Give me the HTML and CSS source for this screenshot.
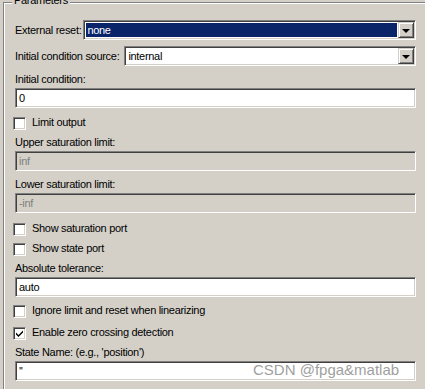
FILE: index.html
```html
<!DOCTYPE html>
<html>
<head>
<meta charset="utf-8">
<link rel="stylesheet" href="styles.css">
</head>
<body>
<div class="group">
  <span class="legend">Parameters</span>
  <div class="content">
    <div class="select-row first">
      <span class="lbl">External reset:</span>
      <div class="select sel-a">
        <div class="value"><span class="hl">none</span></div>
        <div class="btn"><span class="tri"></span></div>
      </div>
    </div>
    <div class="select-row second">
      <span class="lbl">Initial condition source:</span>
      <div class="select sel-b">
        <div class="value"><span class="plain">internal</span></div>
        <div class="btn"><span class="tri"></span></div>
      </div>
    </div>

    <div class="label m6">Initial condition:</div>
    <div class="field">0</div>

    <div class="check-row m6"><span class="box"></span><span class="ctext">Limit output</span></div>

    <div class="label m1">Upper saturation limit:</div>
    <div class="field disabled">inf</div>

    <div class="label m6">Lower saturation limit:</div>
    <div class="field disabled">-inf</div>

    <div class="check-row m7"><span class="box"></span><span class="ctext">Show saturation port</span></div>
    <div class="check-row"><span class="box"></span><span class="ctext">Show state port</span></div>

    <div class="label m1">Absolute tolerance:</div>
    <div class="field">auto</div>

    <div class="check-row m5"><span class="box"></span><span class="ctext">Ignore limit and reset when linearizing</span></div>
    <div class="check-row m2"><span class="box checked"><svg width="9" height="9" viewBox="0 0 9 9"><path d="M1 3.5 L3.5 6 L8 1.5 L8 3.5 L3.5 8 L1 5.5 Z" fill="#000"/></svg></span><span class="ctext">Enable zero crossing detection</span></div>

    <div class="label m1">State Name: (e.g., 'position')</div>
    <div class="field">''</div>
  </div>
</div>
<div class="watermark">CSDN @fpga&amp;matlab</div>
</body>
</html>
```
FILE: styles.css
```css
html, body {
  margin: 0;
  padding: 0;
}
body {
  width: 425px;
  height: 389px;
  overflow: hidden;
  background: #d4d0c8;
  font-family: "Liberation Sans", Arial, sans-serif;
  font-size: 11px;
  letter-spacing: -0.3px;
  color: #000;
  position: relative;
}
.group {
  position: relative;
  margin: 2px 0 0 3px;
  width: 422px;
  height: 387px;
  box-sizing: border-box;
  border-top: 1px solid #808080;
  border-left: 1px solid #808080;
  box-shadow: inset 1px 1px 0 #fff;
}
.legend {
  position: absolute;
  left: 8px;
  top: -10px;
  padding: 0 2px;
  line-height: 14px;
  background: #d4d0c8;
}
.content {
  display: flex;
  flex-direction: column;
  padding: 17px 0 0 11px;
}
.select-row {
  display: flex;
  align-items: center;
  width: 401px;
  height: 20px;
}
.second { margin-top: 6px; }
.lbl {
  line-height: 14px;
  white-space: nowrap;
}
.select {
  flex: 1;
  display: flex;
  height: 20px;
  box-sizing: border-box;
  border-top: 1px solid #808080;
  border-left: 1px solid #808080;
  border-bottom: 1px solid #fff;
  border-right: 1px solid #fff;
  box-shadow: inset 1px 1px 0 #404040, inset -1px -1px 0 #d4d0c8;
  padding: 1px;
  background: #fff;
}
.sel-a { margin-left: 2px; }
.sel-b { margin-left: 5px; }
.value {
  flex: 1;
  display: flex;
  padding: 1px;
}
.hl, .plain {
  flex: 1;
  line-height: 14px;
  padding-left: 1px;
}
.hl {
  background: #0a246a;
  color: #fff;
}
.btn {
  width: 16px;
  height: 16px;
  box-sizing: border-box;
  background: #d4d0c8;
  border-top: 1px solid #d4d0c8;
  border-left: 1px solid #d4d0c8;
  border-bottom: 1px solid #404040;
  border-right: 1px solid #404040;
  box-shadow: inset 1px 1px 0 #fff, inset -1px -1px 0 #808080;
  display: flex;
  align-items: center;
  justify-content: center;
}
.tri {
  width: 0;
  height: 0;
  border-left: 4px solid transparent;
  border-right: 4px solid transparent;
  border-top: 4px solid #000;
  margin-top: 1px;
}
.label {
  line-height: 14px;
  margin-bottom: 2px;
  white-space: nowrap;
}
.m1 { margin-top: 1px; }
.m2 { margin-top: 2px; }
.m5 { margin-top: 5px; }
.m6 { margin-top: 6px; }
.m7 { margin-top: 7px; }
.field {
  width: 401px;
  height: 20px;
  box-sizing: border-box;
  border-top: 1px solid #808080;
  border-left: 1px solid #808080;
  border-bottom: 1px solid #fff;
  border-right: 1px solid #fff;
  box-shadow: inset 1px 1px 0 #404040, inset -1px -1px 0 #d4d0c8;
  padding: 1px 3px;
  line-height: 16px;
  background: #fff;
}
.field.disabled {
  background: #d4d0c8;
  color: #808080;
}
.check-row {
  display: flex;
  align-items: flex-start;
  height: 20px;
  margin-left: -2px;
}
.box {
  width: 13px;
  height: 13px;
  box-sizing: border-box;
  margin-top: 3px;
  border-top: 1px solid #808080;
  border-left: 1px solid #808080;
  border-bottom: 1px solid #fff;
  border-right: 1px solid #fff;
  box-shadow: inset 1px 1px 0 #404040, inset -1px -1px 0 #d4d0c8;
  background: #fff;
  display: flex;
  align-items: center;
  justify-content: center;
  flex: none;
}
.box svg { display: block; }
.ctext {
  margin-left: 6px;
  margin-top: 1px;
  line-height: 14px;
  white-space: nowrap;
}
.watermark {
  position: absolute;
  left: 253px;
  top: 361px;
  font-size: 15px;
  letter-spacing: 0;
  line-height: 18px;
  color: #a0a0a0;
  text-shadow: 0 0 1px #fff;
  white-space: nowrap;
}
```
